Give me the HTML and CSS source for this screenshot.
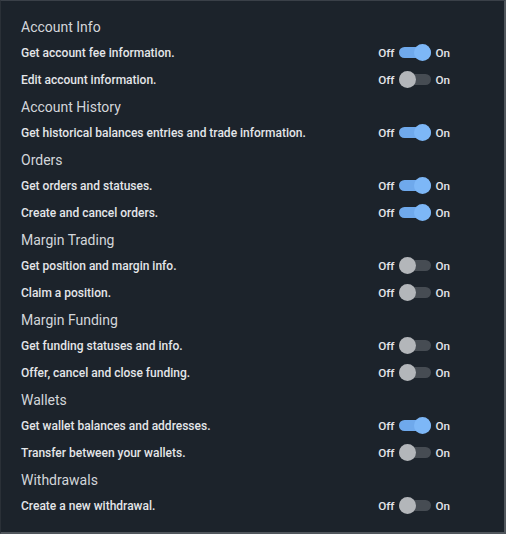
FILE: index.html
```html
<!DOCTYPE html>
<html lang="en">

<head>
    <meta charset="UTF-8">
    <meta name="viewport" content="width=device-width, initial-scale=1.0">
    <title>API permissions</title>
    <link rel="stylesheet" href="styles.css">
</head>

<body>
    <div class="panel">
        <div class="group">
            <div class="group__title">Account Info</div>
            <div class="perm">
                <span class="perm__label">Get account fee information.</span>
                <div class="switch switch--on"><span>Off</span><i class="switch__track"></i><span>On</span></div>
            </div>
            <div class="perm">
                <span class="perm__label">Edit account information.</span>
                <div class="switch"><span>Off</span><i class="switch__track"></i><span>On</span></div>
            </div>
        </div>
        <div class="group">
            <div class="group__title">Account History</div>
            <div class="perm">
                <span class="perm__label">Get historical balances entries and trade information.</span>
                <div class="switch switch--on"><span>Off</span><i class="switch__track"></i><span>On</span></div>
            </div>
        </div>
        <div class="group">
            <div class="group__title">Orders</div>
            <div class="perm">
                <span class="perm__label">Get orders and statuses.</span>
                <div class="switch switch--on"><span>Off</span><i class="switch__track"></i><span>On</span></div>
            </div>
            <div class="perm">
                <span class="perm__label">Create and cancel orders.</span>
                <div class="switch switch--on"><span>Off</span><i class="switch__track"></i><span>On</span></div>
            </div>
        </div>
        <div class="group">
            <div class="group__title">Margin Trading</div>
            <div class="perm">
                <span class="perm__label">Get position and margin info.</span>
                <div class="switch"><span>Off</span><i class="switch__track"></i><span>On</span></div>
            </div>
            <div class="perm">
                <span class="perm__label">Claim a position.</span>
                <div class="switch"><span>Off</span><i class="switch__track"></i><span>On</span></div>
            </div>
        </div>
        <div class="group">
            <div class="group__title">Margin Funding</div>
            <div class="perm">
                <span class="perm__label">Get funding statuses and info.</span>
                <div class="switch"><span>Off</span><i class="switch__track"></i><span>On</span></div>
            </div>
            <div class="perm">
                <span class="perm__label">Offer, cancel and close funding.</span>
                <div class="switch"><span>Off</span><i class="switch__track"></i><span>On</span></div>
            </div>
        </div>
        <div class="group">
            <div class="group__title">Wallets</div>
            <div class="perm">
                <span class="perm__label">Get wallet balances and addresses.</span>
                <div class="switch switch--on"><span>Off</span><i class="switch__track"></i><span>On</span></div>
            </div>
            <div class="perm">
                <span class="perm__label">Transfer between your wallets.</span>
                <div class="switch"><span>Off</span><i class="switch__track"></i><span>On</span></div>
            </div>
        </div>
        <div class="group">
            <div class="group__title">Withdrawals</div>
            <div class="perm">
                <span class="perm__label">Create a new withdrawal.</span>
                <div class="switch"><span>Off</span><i class="switch__track"></i><span>On</span></div>
            </div>
        </div>
    </div>
</body>

</html>
```

FILE: styles.css
```css
*,
*::after,
*::before {
    padding: 0;
    margin: 0;
    box-sizing: border-box;
}

html,
body {
    height: 100%;
}

body {
    background: #1c232b;
    font-family: Roboto, "Liberation Sans", sans-serif;
}

.panel {
    width: 506px;
    height: 534px;
    background: #1c232b;
    border-top: 1px solid #3a4048;
    border-left: 1px solid #2a3037;
    border-right: 2px solid #50565c;
    border-bottom: 2px solid #50565c;
    padding: 13px 54px 0 20px;
}

.group__title {
    height: 26px;
    display: flex;
    align-items: center;
    font-size: 14px;
    color: #d3d6da;
}

.perm {
    height: 27px;
    padding-bottom: 2px;
    display: flex;
    align-items: center;
    justify-content: space-between;
}

.perm__label {
    font-size: 12px;
    font-weight: 500;
    color: #e4e6e9;
}

.switch {
    display: flex;
    align-items: center;
    gap: 4px;
    font-size: 11.7px;
    font-weight: 500;
    color: #e4e6e9;
}

.switch__track {
    position: relative;
    width: 32px;
    height: 11px;
    margin: 0 0 0 1px;
    border-radius: 6px;
    background: #464c53;
}

.switch__track::after {
    content: "";
    position: absolute;
    top: -3px;
    left: 0;
    width: 17px;
    height: 17px;
    border-radius: 50%;
    background: #b3b6ba;
}

.switch--on .switch__track {
    background: #6fa9ec;
}

.switch--on .switch__track::after {
    left: auto;
    right: 0;
    background: #7db7f7;
}
```
